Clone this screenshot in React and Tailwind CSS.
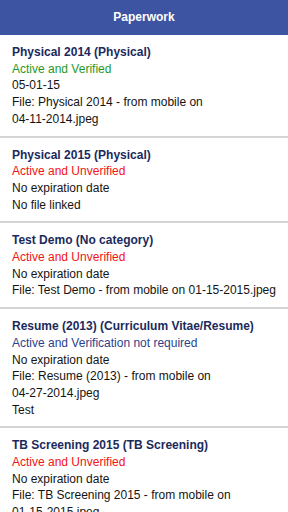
import React from 'react';

const items = [
  {
    title: 'Physical 2014 (Physical)',
    status: 'Active and Verified',
    tone: 'green',
    lines: ['05-01-15'],
    file: ['Physical 2014', '04-11-2014.jpeg'],
  },
  {
    title: 'Physical 2015 (Physical)',
    status: 'Active and Unverified',
    tone: 'red',
    lines: ['No expiration date', 'No file linked'],
  },
  {
    title: 'Test Demo (No category)',
    status: 'Active and Unverified',
    tone: 'red',
    lines: ['No expiration date'],
    file: ['Test Demo', '01-15-2015.jpeg'],
  },
  {
    title: 'Resume (2013) (Curriculum Vitae/Resume)',
    status: 'Active and Verification not required',
    tone: 'blue',
    lines: ['No expiration date'],
    file: ['Resume (2013)', '04-27-2014.jpeg'],
    note: 'Test',
  },
  {
    title: 'TB Screening 2015 (TB Screening)',
    status: 'Active and Unverified',
    tone: 'red',
    lines: ['No expiration date'],
    file: ['TB Screening 2015', '01-15-2015.jpeg'],
  },
];

const toneClass = {
  green: 'text-[#1f9a1f]',
  red: 'text-[#f21414]',
  blue: 'text-[#2b3f8c]',
};

function Item({ item }) {
  return (
    <div className="pl-3 pr-2 pt-[9px] pb-[8px] border-b-2 border-[#d4d4d4] text-[#141414]">
      <div className="font-bold text-[#1b2a5c]">{item.title}</div>
      <div className={toneClass[item.tone]}>{item.status}</div>
      {item.lines.map((l, i) => (
        <div key={i}>{l}</div>
      ))}
      {item.file && (
        <div>
          File: {item.file[0]} - from mobile on{' '}
          <span className="whitespace-nowrap">{item.file[1]}</span>
        </div>
      )}
      {item.note && <div>{item.note}</div>}
    </div>
  );
}

export default function App() {
  return (
    <div
      className="w-[288px] h-[512px] overflow-hidden bg-white text-[12px] leading-[16.7px]"
      style={{ fontFamily: '"Liberation Sans", Arial, sans-serif' }}
    >
      <div className="h-[35px] bg-[#3d54a2] flex items-center justify-center text-white font-bold">
        Paperwork
      </div>
      {items.map((it, i) => (
        <Item key={i} item={it} />
      ))}
    </div>
  );
}
